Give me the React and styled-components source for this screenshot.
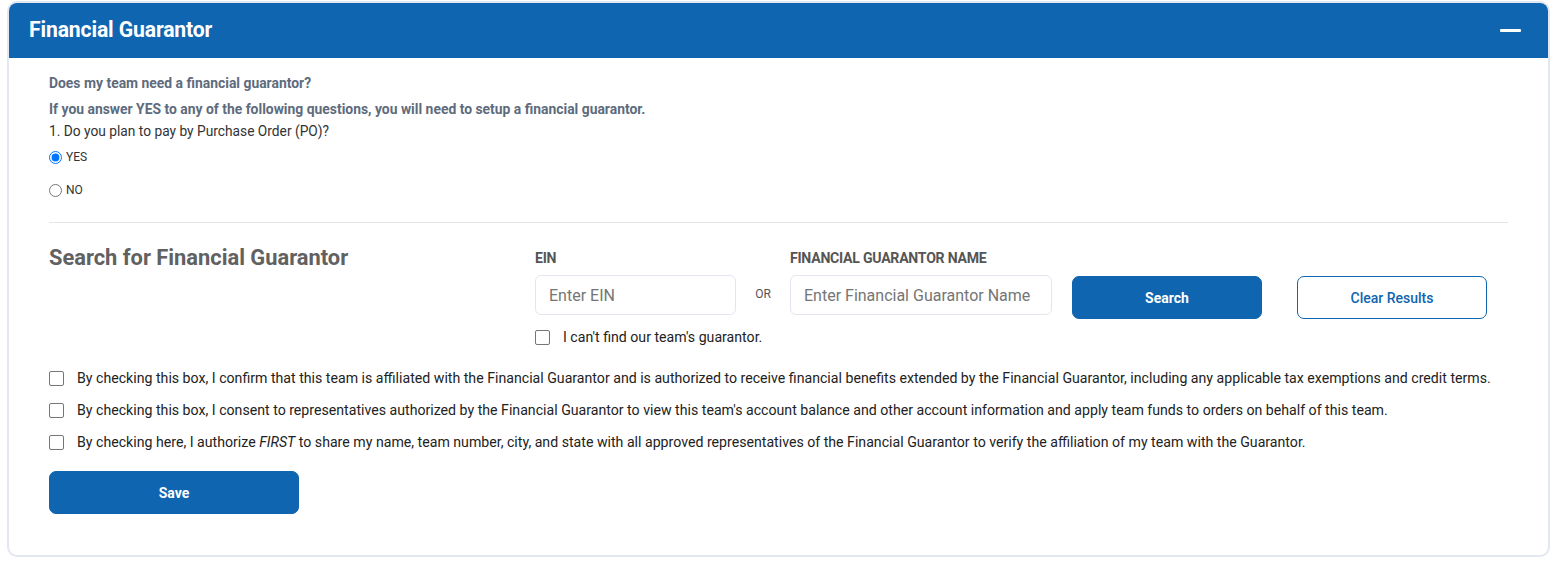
import styled, { createGlobalStyle } from "styled-components";

const GlobalStyle = createGlobalStyle`
  body {
    margin: 0;
    background: #ffffff;
    font-family: Roboto, "Liberation Sans", sans-serif;
  }
`;

const Page = styled.div`
  padding: 1px 6px 9px 7px;
`;

const Card = styled.section`
  border: 2px solid #e3e8f0;
  border-radius: 10px;
  overflow: hidden;
  background: #fff;
`;

const Header = styled.header`
  display: flex;
  align-items: center;
  justify-content: space-between;
  height: 55px;
  padding: 0 27px 0 20px;
  background: #0f65b0;
  color: #fff;
`;

const Title = styled.h2`
  margin: 0 0 2px;
  font-size: 21.2px;
  font-weight: 700;
  letter-spacing: -0.15px;
`;

const Collapse = styled.span`
  display: block;
  width: 21px;
  height: 3px;
  background: #fff;
  border-radius: 1px;
`;

const Body = styled.div`
  padding: 16px 40px 41px 40px;
`;

const Question = styled.p`
  margin: 0 0 ${(p) => p.$gap ?? 8}px;
  font-size: 13.9px;
  font-weight: 700;
  color: #5e6b7c;
  line-height: 18px;
`;

const Sub = styled.p`
  margin: 0;
  font-size: 13.75px;
  color: #333;
  line-height: 16px;
`;

const RadioRow = styled.label`
  display: flex;
  align-items: center;
  gap: 2px;
  height: 16px;
  margin: ${(p) => p.$mt}px 0 0;
  font-size: 12px;
  color: #333;
  input {
    margin: 0 2px 0 0;
    width: 13px;
    height: 13px;
  }
`;

const Divider = styled.hr`
  border: 0;
  border-top: 1px solid #e5e5e5;
  margin: 24px 0 20px;
`;

const SearchGrid = styled.div`
  display: grid;
  grid-template-columns: 486px 201px 54px 262px 20px 190px 35px 190px;
  align-items: start;
`;

const SearchTitle = styled.h3`
  margin: 2px 0 0;
  font-size: 21.85px;
  font-weight: 700;
  color: #616161;
`;

const Field = styled.div`
  display: flex;
  flex-direction: column;
`;

const FieldLabel = styled.label`
  font-size: 14.1px;
  font-weight: 700;
  color: #555;
  height: 18px;
  line-height: 18px;
  margin: 6px 0 8px;
  letter-spacing: -0.25px;
  white-space: nowrap;
`;

const Input = styled.input`
  box-sizing: border-box;
  width: 100%;
  height: 40px;
  border: 1px solid #e2e6ee;
  border-radius: 6px;
  padding: 0 13px;
  font-family: inherit;
  font-size: 16px;
  color: #333;
  outline: 0;
  &::placeholder {
    color: #757575;
  }
`;

const Or = styled.span`
  margin-top: 44px;
  text-align: center;
  font-size: 12px;
  color: #555;
`;

const Button = styled.button`
  box-sizing: border-box;
  width: ${(p) => p.$w || 190}px;
  height: 43px;
  margin-top: ${(p) => p.$mt || 0}px;
  border-radius: 7px;
  border: 1px solid #0f65b0;
  background: ${(p) => (p.$outline ? "#fff" : "#0f65b0")};
  color: ${(p) => (p.$outline ? "#0f65b0" : "#fff")};
  font-family: inherit;
  font-size: 14px;
  font-weight: ${(p) => (p.$outline ? 500 : 700)};
  cursor: pointer;
`;

const CheckRow = styled.label`
  display: flex;
  align-items: center;
  gap: 13px;
  font-size: 14.15px;
  color: #222;
  line-height: 18px;
  white-space: nowrap;
  em {
    font-style: italic;
  }
`;

const Box = styled.span`
  box-sizing: border-box;
  flex: none;
  width: 15px;
  height: 15px;
  border: 1px solid #767676;
  border-radius: 2px;
  background: #fff;
`;

const Cant = styled.div`
  grid-column: 2 / 5;
  margin-top: 9px;
`;

const Confirms = styled.div`
  display: flex;
  flex-direction: column;
  gap: 14px;
  margin-top: 23px;
`;

const confirms = [
  <>By checking this box, I confirm that this team is affiliated with the Financial Guarantor and is authorized to receive financial benefits extended by the Financial Guarantor, including any applicable tax exemptions and credit terms.</>,
  <>By checking this box, I consent to representatives authorized by the Financial Guarantor to view this team's account balance and other account information and apply team funds to orders on behalf of this team.</>,
  <>By checking here, I authorize <em>FIRST</em> to share my name, team number, city, and state with all approved representatives of the Financial Guarantor to verify the affiliation of my team with the Guarantor.</>,
];

export default function App() {
  return (
    <>
      <GlobalStyle />
      <Page>
        <Card>
          <Header>
            <Title>Financial Guarantor</Title>
            <Collapse />
          </Header>
          <Body>
            <Question>Does my team need a financial guarantor?</Question>
            <Question $gap={5}>If you answer YES to any of the following questions, you will need to setup a financial guarantor.</Question>
            <Sub>1. Do you plan to pay by Purchase Order (PO)?</Sub>
            <RadioRow $mt={10}>
              <input type="radio" name="po" defaultChecked />
              YES
            </RadioRow>
            <RadioRow $mt={17}>
              <input type="radio" name="po" />
              NO
            </RadioRow>
            <Divider />
            <SearchGrid>
              <SearchTitle>Search for Financial Guarantor</SearchTitle>
              <Field>
                <FieldLabel>EIN</FieldLabel>
                <Input placeholder="Enter EIN" />
              </Field>
              <Or>OR</Or>
              <Field>
                <FieldLabel>FINANCIAL GUARANTOR NAME</FieldLabel>
                <Input placeholder="Enter Financial Guarantor Name" />
              </Field>
              <span />
              <Button $mt={33}>Search</Button>
              <span />
              <Button $mt={33} $outline>Clear Results</Button>
              <span />
              <Cant>
                <CheckRow>
                  <Box />
                  I can't find our team's guarantor.
                </CheckRow>
              </Cant>
            </SearchGrid>
            <Confirms>
              {confirms.map((text, i) => (
                <CheckRow key={i}>
                  <Box />
                  <span>{text}</span>
                </CheckRow>
              ))}
            </Confirms>
            <Button $w={250} $mt={20}>Save</Button>
          </Body>
        </Card>
      </Page>
    </>
  );
}
